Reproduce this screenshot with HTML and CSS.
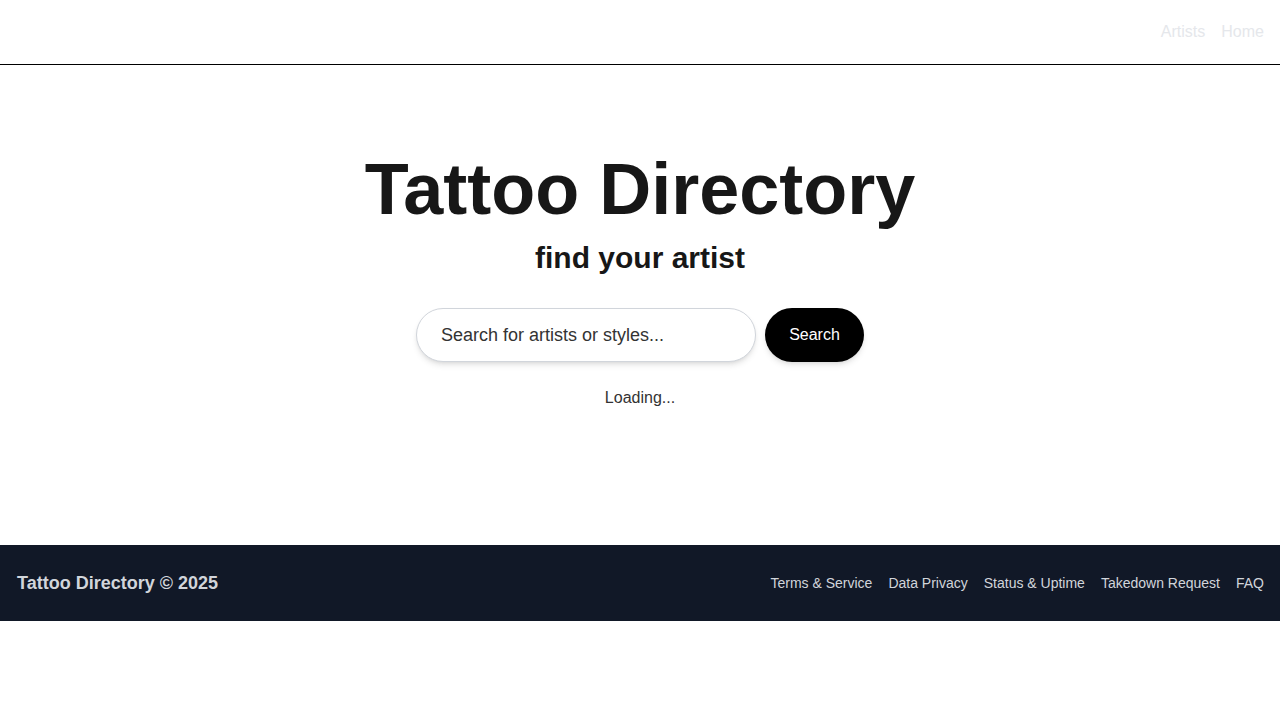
FILE: index.html
```html
<!DOCTYPE html>
<html lang="en">
<head>
<meta charset="utf-8">
<title>Tattoo Directory</title>
<link rel="stylesheet" href="styles.css">
</head>
<body>
<header class="topbar">
  <nav class="nav">
    <a href="#" class="nav-link">Artists</a>
    <a href="#" class="nav-link">Home</a>
  </nav>
</header>
<main class="hero">
  <h1 class="title">Tattoo Directory</h1>
  <h2 class="subtitle">find your artist</h2>
  <form class="search">
    <input class="search-input" type="text" placeholder="Search for artists or styles...">
    <button class="search-btn" type="button">Search</button>
  </form>
  <p class="loading">Loading...</p>
</main>
<footer class="footer">
  <div class="brand">Tattoo Directory © 2025</div>
  <nav class="footer-links">
    <a href="#">Terms &amp; Service</a>
    <a href="#">Data Privacy</a>
    <a href="#">Status &amp; Uptime</a>
    <a href="#">Takedown Request</a>
    <a href="#">FAQ</a>
  </nav>
</footer>
</body>
</html>
```
FILE: styles.css
```css
* { box-sizing: border-box; }
html, body { margin: 0; padding: 0; background: #fff; }
body { font-family: "Liberation Sans", Arial, sans-serif; color: #171717; }

.topbar {
  height: 65px;
  border-bottom: 1px solid #000;
  display: flex;
  justify-content: flex-end;
  align-items: center;
  padding: 0 16px;
}
.nav { display: flex; gap: 16px; }
.nav-link { color: #e5e7eb; text-decoration: none; font-size: 16px; }

.hero {
  height: 480px;
  display: flex;
  flex-direction: column;
  align-items: center;
  padding-top: 88px;
}
.title {
  margin: 0;
  font-size: 72px;
  line-height: 1;
  font-weight: 700;
  color: #171717;
}
.subtitle {
  margin: 15px 0 0;
  font-size: 30px;
  line-height: 36px;
  font-weight: 700;
  color: #171717;
}
.search {
  margin-top: 32px;
  display: flex;
  gap: 9px;
}
.search-input {
  width: 340px;
  height: 54px;
  border: 1px solid #d1d5db;
  border-radius: 9999px;
  padding: 0 24px;
  font-family: inherit;
  font-size: 18px;
  color: #333;
  box-shadow: 0 4px 6px -1px rgba(0,0,0,0.1), 0 2px 4px -2px rgba(0,0,0,0.1);
  outline: none;
}
.search-input::placeholder { color: #333; }
.search-btn {
  width: 99px;
  height: 54px;
  border: none;
  border-radius: 9999px;
  background: #000;
  color: #fff;
  font-family: inherit;
  font-size: 16px;
  box-shadow: 0 4px 6px -1px rgba(0,0,0,0.1), 0 2px 4px -2px rgba(0,0,0,0.1);
}
.loading {
  margin: 24px 0 0;
  font-size: 16px;
  line-height: 24px;
  color: #333;
}

.footer {
  height: 76px;
  background: #111827;
  display: flex;
  align-items: center;
  justify-content: space-between;
  padding: 0 16px 0 17px;
}
.brand { color: #d1d5db; font-weight: 700; font-size: 18px; }
.footer-links { display: flex; gap: 16px; }
.footer-links a { color: #d1d5db; text-decoration: none; font-size: 14px; }
```
